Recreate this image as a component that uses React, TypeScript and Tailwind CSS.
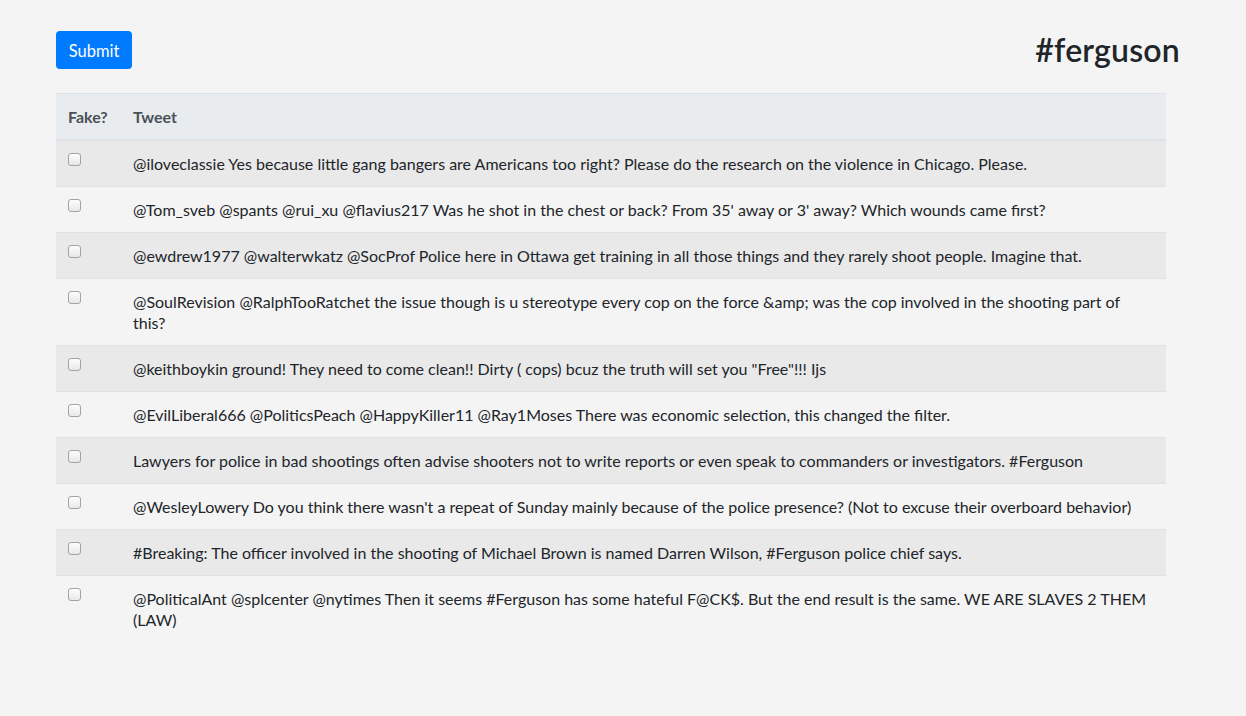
const tweets = [
  "@iloveclassie Yes because little gang bangers are Americans too right? Please do the research on the violence in Chicago. Please.",
  "@Tom_sveb @spants @rui_xu @flavius217 Was he shot in the chest or back? From 35' away or 3' away? Which wounds came first?",
  "@ewdrew1977 @walterwkatz @SocProf Police here in Ottawa get training in all those things and they rarely shoot people. Imagine that.",
  "@SoulRevision @RalphTooRatchet the issue though is u stereotype every cop on the force &amp; was the cop involved in the shooting part of this?",
  "@keithboykin ground! They need to come clean!! Dirty ( cops) bcuz the truth will set you \"Free\"!!! Ijs",
  "@EvilLiberal666 @PoliticsPeach @HappyKiller11 @Ray1Moses There was economic selection, this changed the filter.",
  "Lawyers for police in bad shootings often advise shooters not to write reports or even speak to commanders or investigators. #Ferguson",
  "@WesleyLowery Do you think there wasn't a repeat of Sunday mainly because of the police presence? (Not to excuse their overboard behavior)",
  "#Breaking: The officer involved in the shooting of Michael Brown is named Darren Wilson, #Ferguson police chief says.",
  "@PoliticalAnt @splcenter @nytimes Then it seems #Ferguson has some hateful F@CK$. But the end result is the same. WE ARE SLAVES 2 THEM (LAW)",
];

export default function App() {
  return (
    <div className="min-h-screen bg-[#f4f4f4] pl-[56px] pr-[66px] pt-[31px] font-['Lato',sans-serif] text-[#212529]">
      <div className="flex items-start justify-between">
        <button className="h-[38px] w-[76px] rounded-[4px] bg-[#007bff] pt-px text-[16.5px] leading-[24px] text-white">
          Submit
        </button>
        <h2 className="text-[32px] font-semibold leading-[38px] tracking-[0.2px] text-[#212529]">#ferguson</h2>
      </div>
      <div className="mt-[24px] w-[1110px] text-[16px] leading-[21px]">
        <div className="grid grid-cols-[65px_1fr] border-t border-b-2 border-[#dee2e6] bg-[#e9ecef] font-bold text-[#495057]">
          <div className="py-3 pl-3">Fake?</div>
          <div className="px-3 py-3">Tweet</div>
        </div>
        {tweets.map((t, i) => (
          <div
            key={i}
            className={`grid grid-cols-[65px_1fr] border-[#dee2e6] ${i > 0 ? "border-t" : ""} ${i % 2 === 0 ? "bg-[#e9e9e9]" : "bg-[#f4f4f4]"}`}
          >
            <div className="py-3 pl-3">
              <input
                type="checkbox"
                className="block h-[13px] w-[13px] appearance-none rounded-[3px] border border-[#a3a3a3] bg-gradient-to-b from-[#fdfdfd] to-[#e8e8e8]"
              />
            </div>
            <div className="px-3 py-3">{t}</div>
          </div>
        ))}
      </div>
    </div>
  );
}
